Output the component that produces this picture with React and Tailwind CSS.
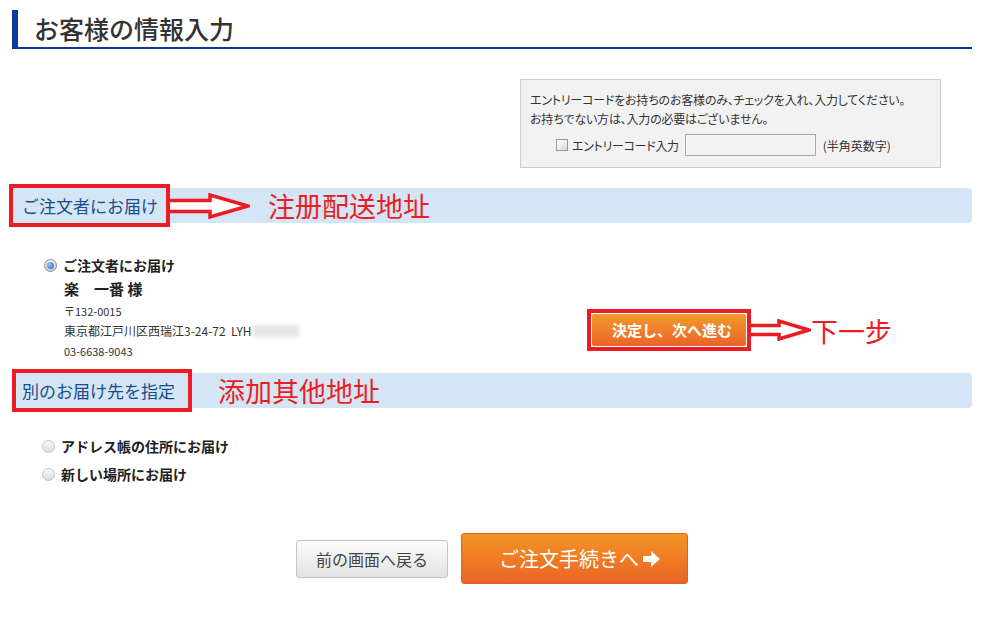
import React from 'react';

const jp = "font-['Noto_Sans_CJK_JP','Noto_Sans',sans-serif]";
const sc = "font-['Noto_Sans_CJK_SC','Noto_Sans',sans-serif]";

const OutlineArrow = ({ width, height, shaft, head }) => {
  const mid = height / 2;
  const d = `M0,${mid - shaft / 2} H${head} V2 L${width - 2},${mid} L${head},${height - 2} V${mid + shaft / 2} H0`;
  return (
    <svg width={width} height={height} viewBox={`0 0 ${width} ${height}`} className="shrink-0">
      <path d={d} fill="#fff" stroke="#ed1c24" strokeWidth="3.5" strokeLinejoin="miter" />
    </svg>
  );
};

const Radio = ({ checked }) => (
  <span
    className={
      'flex h-[13px] w-[13px] shrink-0 items-center justify-center rounded-full border ' +
      (checked
        ? 'border-[#8a8a8a] bg-linear-to-b from-[#f4f4f4] to-[#cfcfcf]'
        : 'border-[#c2c2c2] bg-linear-to-b from-[#fafafa] to-[#dcdcdc]')
    }
  >
    {checked && (
      <span className="h-[7px] w-[7px] rounded-full bg-[radial-gradient(circle_at_35%_35%,#8fd0ff,#1a63bd)]" />
    )}
  </span>
);

const SectionBar = ({ label, boxWidth, boxPad, boxShift, note, noteGap, arrow }) => (
  <div className="flex h-[35px] items-center rounded-r-[4px] bg-[#d4e6f5]">
    <div
      className={`flex h-[43px] shrink-0 items-center border-4 border-[#ed1c24] ${boxWidth} ${boxPad} ${boxShift}`}
    >
      <span className={`${jp} text-[17px] leading-none text-[#1b4c8c]`}>{label}</span>
    </div>
    {arrow}
    <span className={`${sc} ${noteGap} text-[27px] leading-none text-[#ed1c24]`}>{note}</span>
  </div>
);

export default function App() {
  return (
    <div className={`${jp} min-h-[631px] w-[984px] bg-white px-3 text-[#333]`}>
      {/* page title */}
      <div className="pt-[10px]">
        <div className="flex h-[39px] items-center border-b-2 border-l-[6px] border-[#0a3aa0] pl-4">
          <h1 className="text-[25px] font-medium leading-none text-[#333]">お客様の情報入力</h1>
        </div>
      </div>

      {/* entry code */}
      <div className="mt-[30px] flex justify-end pr-[31px]">
        <div className="h-[89px] w-[421px] border border-[#cccccc] bg-[#f2f2f2] pl-[9px] pt-[10px] text-[12px] leading-[19px] text-[#333] [font-feature-settings:'palt']">
          <p className="tracking-[-0.2px]">エントリーコードをお持ちのお客様のみ、チェックを入れ、入力してください。</p>
          <p className="tracking-[-0.2px]">お持ちでない方は、入力の必要はございません。</p>
          <div className="ml-[26px] mt-[6px] flex items-center">
            <span className="h-[12px] w-[12px] border border-[#9a9a9a] bg-linear-to-br from-[#ffffff] to-[#d9d9d9]" />
            <span className="ml-[4px] tracking-[-0.3px]">エントリーコード入力</span>
            <span className="ml-[6px] h-[22px] w-[131px] border border-[#a9a9a9] bg-[#f2f2f2]" />
            <span className="ml-[7px]">(半角英数字)</span>
          </div>
        </div>
      </div>

      {/* section 1 */}
      <div className="mt-[20px]">
        <SectionBar
          label="ご注文者にお届け"
          boxWidth="w-[161px]"
          boxPad="pl-[9px]"
          boxShift="-ml-[3px]"
          note="注册配送地址"
          noteGap="ml-[18px]"
          arrow={<OutlineArrow width={80} height={26} shaft={11} head={40} />}
        />
      </div>

      <div className="flex pl-[32px]">
        <div className="w-[543px] shrink-0 pt-[32px]">
          <label className="flex h-[20px] items-center gap-[6px]">
            <Radio checked />
            <span className="text-[14px] font-bold text-[#222]">ご注文者にお届け</span>
          </label>
          <div className="pl-[20px]">
            <p className="mt-[4px] h-[20px] text-[15px] font-bold leading-[20px] text-[#222]">楽　一番 様</p>
            <p className="mt-[2px] h-[20px] text-[11px] leading-[20px]">〒132-0015</p>
            <p className="flex h-[20px] items-center text-[12px] leading-[20px]">
              <span>東京都江戸川区西瑞江3-24-72&nbsp;&nbsp;LYH</span>
              <span className="ml-[1px] h-[12px] w-[46px] bg-[#e4e4e4] blur-[2px]" />
            </p>
            <p className="h-[20px] text-[11px] leading-[20px]">03-6638-9043</p>
          </div>
        </div>

        <div className="mt-[86px] flex h-[42px] items-center">
          <div className="border-4 border-[#ed1c24] bg-white p-px">
            <button className="flex h-[32px] w-[154px] items-center justify-center rounded-[2px] bg-linear-to-b from-[#f39a2b] to-[#e9642a] pl-[6px] text-[15px] font-bold text-white">
              決定し、次へ進む
            </button>
          </div>
          <OutlineArrow width={60} height={22} shaft={9} head={28} />
          <span className={`${sc} text-[27px] leading-none text-[#ed1c24]`}>下一步</span>
        </div>
      </div>

      {/* section 2 */}
      <div className="mt-[12px]">
        <SectionBar
          label="別のお届け先を指定"
          boxWidth="w-[180px]"
          boxPad="pl-[6px]"
          boxShift=""
          note="添加其他地址"
          noteGap="ml-[26px]"
          arrow={null}
        />
      </div>

      <div className="pl-[30px] pt-[28px]">
        <label className="flex h-[20px] items-center gap-[6px]">
          <Radio />
          <span className="text-[14px] font-bold text-[#222]">アドレス帳の住所にお届け</span>
        </label>
        <label className="mt-[8px] flex h-[20px] items-center gap-[6px]">
          <Radio />
          <span className="text-[14px] font-bold text-[#222]">新しい場所にお届け</span>
        </label>
      </div>

      {/* bottom buttons */}
      <div className="mt-[49px] flex items-center justify-center gap-[13px]">
        <button className="flex h-[38px] w-[152px] items-center justify-center rounded-[3px] border border-[#c4c4c4] bg-linear-to-b from-[#fbfbfb] to-[#e3e3e3] text-[16px] text-[#444]">
          前の画面へ戻る
        </button>
        <button className="flex h-[51px] w-[227px] items-center justify-center rounded-[3px] border border-[#e0601f] bg-linear-to-b from-[#f39424] to-[#ea6325] pl-[10px] text-[20px] text-white">
          <span>ご注文手続きへ</span>
          <svg width="17" height="16" viewBox="0 0 17 16" className="ml-[4px]">
            <path d="M0,5 H8 V0 L17,8 L8,16 V11 H0 Z" fill="#fff" />
          </svg>
        </button>
      </div>
    </div>
  );
}
